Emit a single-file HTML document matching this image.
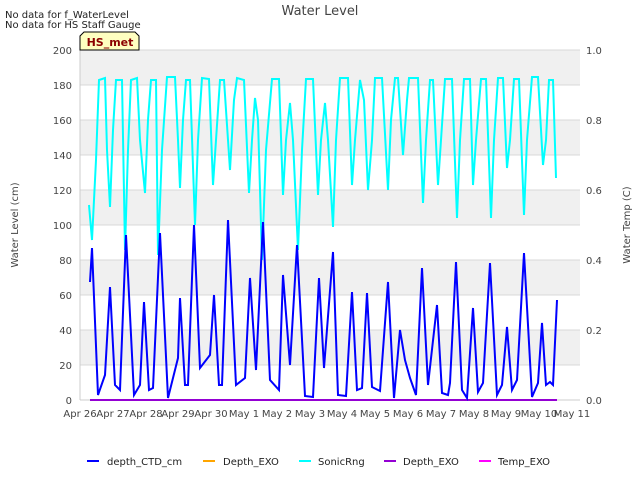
<!DOCTYPE html><html><head><style>body{margin:0;background:#fff;font-family:"DejaVu Sans",sans-serif}</style></head><body>
<svg width="640" height="480" xmlns="http://www.w3.org/2000/svg" font-family="DejaVu Sans, sans-serif">
<rect width="640" height="480" fill="#fff"/>
<g fill="#f0f0f0"><rect x="80" y="50" width="500" height="35"/><rect x="80" y="120" width="500" height="35"/><rect x="80" y="190" width="500" height="35"/><rect x="80" y="260" width="500" height="35"/><rect x="80" y="330" width="500" height="35"/></g>
<g stroke="#d8d8d8" stroke-width="1"><line x1="80" x2="580" y1="85" y2="85"/><line x1="80" x2="580" y1="120" y2="120"/><line x1="80" x2="580" y1="155" y2="155"/><line x1="80" x2="580" y1="190" y2="190"/><line x1="80" x2="580" y1="225" y2="225"/><line x1="80" x2="580" y1="260" y2="260"/><line x1="80" x2="580" y1="295" y2="295"/><line x1="80" x2="580" y1="330" y2="330"/><line x1="80" x2="580" y1="365" y2="365"/><line x1="80" x2="580" y1="50" y2="50"/></g>
<line x1="80" y1="50" x2="80" y2="400" stroke="#ccc"/><line x1="80" y1="400" x2="580" y2="400" stroke="#ccc"/>
<polyline fill="none" stroke="#00ffff" stroke-width="2" points="89,205 92,240 96,160 99,80 105,78 107,150 110,207 113,130 116,80 122,80 125,250 128,150 131,80 137,78 140,140 145,193 148,120 151,80 156,80 158,255 162,150 167,77 175,77 178,140 180,188 183,120 186,80 190,80 195,225 198,140 202,78 209,79 213,185 216,140 220,80 224,80 230,170 234,100 237,78 244,80 249,193 252,140 255,98 258,120 262,260 266,150 272,79 279,79 283,195 286,140 290,103 293,140 298,250 302,150 306,79 313,79 318,195 321,140 325,103 328,140 333,227 336,140 340,78 348,78 352,185 355,140 360,80 364,100 368,190 372,140 375,78 382,78 388,190 391,120 395,78 398,78 403,155 407,100 409,78 418,78 423,203 426,140 430,80 433,80 438,185 441,140 445,79 452,79 457,218 460,140 464,79 470,79 473,185 476,140 481,79 486,79 491,218 494,140 498,78 503,78 507,168 510,140 514,79 519,79 524,215 527,140 532,77 538,77 543,165 546,140 549,80 553,80 556,178"/>
<line x1="90" y1="400" x2="557" y2="400" stroke="#9400d3" stroke-width="2"/>
<polyline fill="none" stroke="#0000ff" stroke-width="2" points="90,282 92,248 98,395 105,375 110,287 115,385 120,390 126,235 134,395 140,385 144,302 149,390 153,388 160,233 168,398 178,358 180,298 185,385 188,385 194,225 200,368 210,355 214,295 219,385 222,385 228,220 236,385 245,378 250,278 256,370 263,222 270,380 279,390 283,275 290,365 297,245 305,396 313,397 319,278 324,368 333,252 338,395 346,396 352,292 357,390 362,388 367,293 372,387 380,391 388,282 394,398 400,330 405,360 410,378 416,395 422,268 428,385 437,305 442,393 448,395 450,383 456,262 462,390 467,398 473,308 478,392 483,383 490,263 497,395 502,385 507,327 512,390 517,380 524,253 532,397 538,383 542,323 546,385 550,382 553,385 557,300"/>
<g font-size="10" fill="#444" text-anchor="end"><text x="72" y="54">200</text><text x="72" y="89">180</text><text x="72" y="124">160</text><text x="72" y="159">140</text><text x="72" y="194">120</text><text x="72" y="229">100</text><text x="72" y="264">80</text><text x="72" y="299">60</text><text x="72" y="334">40</text><text x="72" y="369">20</text><text x="72" y="404">0</text></g>
<g font-size="10" fill="#444"><text x="586" y="54">1.0</text><text x="586" y="124">0.8</text><text x="586" y="194">0.6</text><text x="586" y="264">0.4</text><text x="586" y="334">0.2</text><text x="586" y="404">0.0</text></g>
<g font-size="10" fill="#444" text-anchor="middle"><text x="80" y="417">Apr 26</text><text x="113" y="417">Apr 27</text><text x="146" y="417">Apr 28</text><text x="178" y="417">Apr 29</text><text x="211" y="417">Apr 30</text><text x="244" y="417">May 1</text><text x="277" y="417">May 2</text><text x="310" y="417">May 3</text><text x="342" y="417">May 4</text><text x="375" y="417">May 5</text><text x="408" y="417">May 6</text><text x="441" y="417">May 7</text><text x="474" y="417">May 8</text><text x="506" y="417">May 9</text><text x="539" y="417">May 10</text><text x="572" y="417">May 11</text></g>
<text x="18" y="225" font-size="10" fill="#444" text-anchor="middle" transform="rotate(-90 18 225)">Water Level (cm)</text>
<text x="630" y="225" font-size="10" fill="#444" text-anchor="middle" transform="rotate(-90 630 225)">Water Temp (C)</text>
<text x="320" y="15" font-size="13" fill="#444" text-anchor="middle">Water Level</text>
<text x="5" y="18" font-size="10" fill="#222">No data for f_WaterLevel</text>
<text x="5" y="28" font-size="10" fill="#222">No data for HS Staff Gauge</text>
<polygon points="84,32 135,32 139,36 139,50 80,50 80,36" fill="#ffffc0" stroke="#000"/>
<text x="110" y="46" font-size="11" font-weight="bold" fill="#8b0000" text-anchor="middle">HS_met</text>
<g font-size="10" fill="#222"><line x1="87" x2="99" y1="461" y2="461" stroke="#0000ff" stroke-width="2"/><text x="107" y="465">depth_CTD_cm</text>
<line x1="203" x2="215" y1="461" y2="461" stroke="#ffa500" stroke-width="2"/><text x="223" y="465">Depth_EXO</text>
<line x1="299" x2="311" y1="461" y2="461" stroke="#00ffff" stroke-width="2"/><text x="318" y="465">SonicRng</text>
<line x1="384" x2="396" y1="461" y2="461" stroke="#9400d3" stroke-width="2"/><text x="403" y="465">Depth_EXO</text>
<line x1="479" x2="491" y1="461" y2="461" stroke="#ff00ff" stroke-width="2"/><text x="498" y="465">Temp_EXO</text></g>
</svg></body></html>
